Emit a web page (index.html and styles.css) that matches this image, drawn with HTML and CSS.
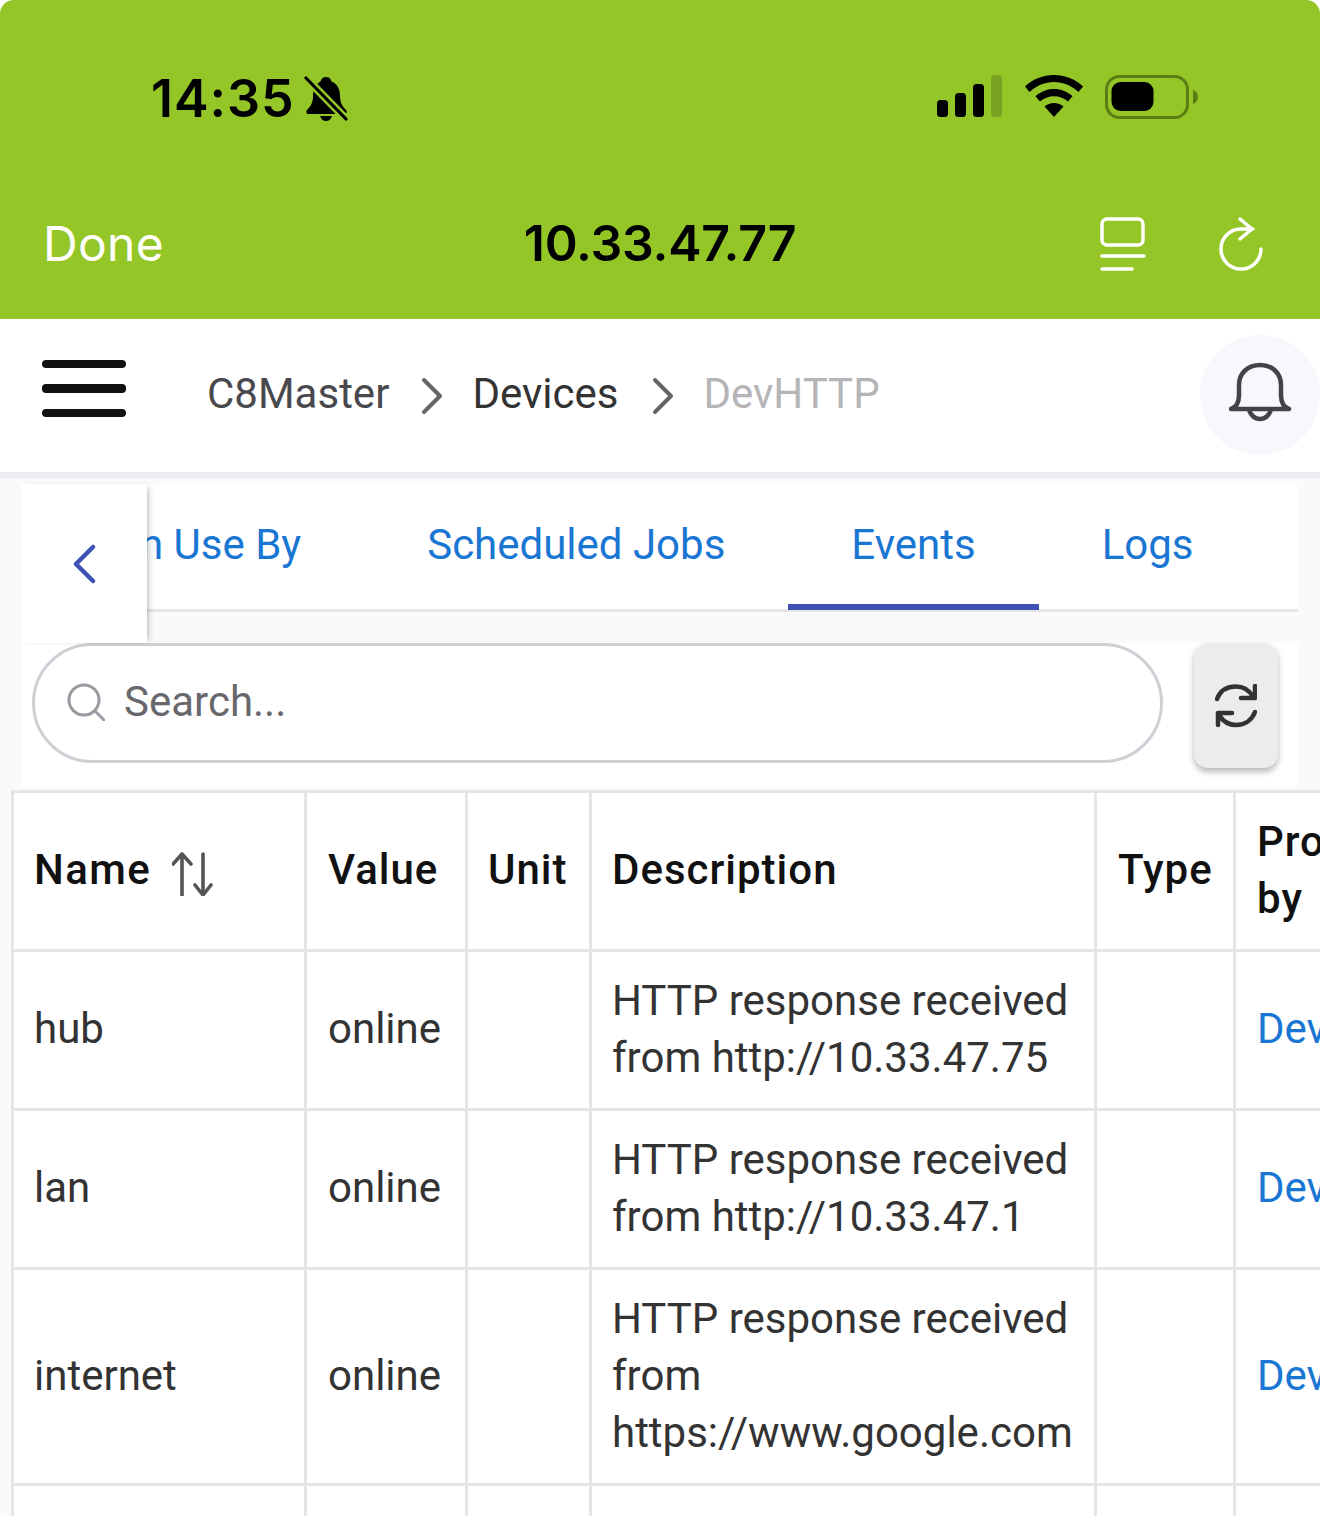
FILE: index.html
```html
<!DOCTYPE html>
<html lang="en">
<head>
<meta charset="utf-8">
<title>DevHTTP</title>
<link rel="stylesheet" href="styles.css">
</head>
<body>
<div class="page">
  <header class="browser">
    <div class="status">
      <div class="status-left">
        <span class="time">14:35</span>
        <svg class="mute" viewBox="0 0 44 46"><path d="M22 1c3 0 5 2 5.500 4.500C34 8 36 14 36 20c0 6 2 10 6 14 1.500 2 .5 4-2 4H5c-2.500 0-3.500-2-2-4 4-4 6-8 6-14 0-6 3-12 7.500-14.500C17 3 19 1 22 1z" fill="#000"/><path d="M16 40h12c-1 3-3 5-6 5s-5-2-6-5z" fill="#000"/><path d="M2 2l40 41" stroke="#94c627" stroke-width="8"/><path d="M2 2l40 41" stroke="#000" stroke-width="3.200" stroke-linecap="round"/></svg>
      </div>
      <div class="status-right">
        <svg class="signal" viewBox="0 0 66 42"><rect x="0" y="25" width="11" height="17" rx="3.500" fill="#000"/><rect x="18" y="18" width="11" height="24" rx="3.500" fill="#000"/><rect x="36" y="9" width="11" height="33" rx="3.500" fill="#000"/><rect x="54" y="0" width="11" height="42" rx="3.500" fill="#79a01e"/></svg>
        <svg class="wifi" viewBox="0 0 58 42"><path d="M29 0c11 0 21 4 29 11.500L53.500 17C46.500 10.500 38 7 29 7S11.500 10.500 4.500 17L0 11.500C8 4 18 0 29 0z" fill="#000"/><path d="M29 14c7 0 13.500 2.700 18.500 7.200L43 26.500c-3.800-3.300-8.700-5.300-14-5.300s-10.200 2-14 5.300l-4.500-5.300C15.500 16.700 22 14 29 14z" fill="#000"/><path d="M29 28c3.600 0 7 1.300 9.500 3.500L29 42l-9.500-10.500C22 29.300 25.400 28 29 28z" fill="#000"/></svg>
        <svg class="battery" viewBox="0 0 94 44"><rect x="1.500" y="1.500" width="81" height="41" rx="13" fill="none" stroke="#5b7d14" stroke-width="3"/><rect x="6.500" y="7" width="42" height="29" rx="9" fill="#000"/><path d="M88 15c3 1 5 4 5 7s-2 6-5 7z" fill="#5b7d14"/></svg>
      </div>
    </div>
    <div class="nav">
      <span class="done">Done</span>
      <span class="address">10.33.47.77</span>
      <div class="nav-icons">
        <svg class="nav-icon" viewBox="0 0 46 54"><rect x="2" y="2" width="41" height="26" rx="5" fill="none" stroke="#fff" stroke-width="3.500"/><path d="M2 39h42M2 52h30" stroke="#fff" stroke-width="3.500" stroke-linecap="round"/></svg>
        <svg class="nav-icon" viewBox="0 0 46 54"><path d="M43 32a20 20 0 1 1-20-20h12M22 2l12 10-12 10" fill="none" stroke="#fff" stroke-width="3.500" stroke-linecap="round" stroke-linejoin="round"/></svg>
      </div>
    </div>
  </header>

  <div class="appbar">
    <div class="burger"><i></i><i></i><i></i></div>
    <nav class="crumbs">
      <span>C8Master</span>
      <svg class="crumb-sep" viewBox="0 0 22 38"><path d="M3 3l16 16L3 35" fill="none" stroke="#666" stroke-width="4" stroke-linecap="round" stroke-linejoin="round"/></svg>
      <span class="crumb-dark">Devices</span>
      <svg class="crumb-sep" viewBox="0 0 22 38"><path d="M3 3l16 16L3 35" fill="none" stroke="#666" stroke-width="4" stroke-linecap="round" stroke-linejoin="round"/></svg>
      <span class="crumb-current">DevHTTP</span>
    </nav>
    <div class="bell"><svg viewBox="0 0 64 62"><path d="M3 48c6-2 8-8 8-14V24C11 12 20 4 32 4s21 8 21 20v10c0 6 2 12 8 14z" fill="none" stroke="#444448" stroke-width="4.500" stroke-linejoin="round" stroke-linecap="round"/><path d="M21 48c1 6 6 10 11 10s10-4 11-10" fill="none" stroke="#444448" stroke-width="4.500"/></svg></div>
  </div>

  <main class="content">
    <div class="card">
      <div class="tabs">
        <span class="tab">In Use By</span>
        <span class="tab">Scheduled Jobs</span>
        <span class="tab tab-active">Events</span>
        <span class="tab">Logs</span>
        <span class="tab-rest"></span>
      </div>
      <div class="tab-back"><svg viewBox="0 0 24 40"><path d="M21 3L4 20l17 17" fill="none" stroke="#3f51b5" stroke-width="4.500" stroke-linecap="round" stroke-linejoin="round"/></svg></div>
      <div class="tools">
        <label class="search">
          <svg viewBox="0 0 38 38"><circle cx="17" cy="17" r="15" fill="none" stroke="#9a9aa3" stroke-width="3"/><path d="M28 28l9 9" stroke="#9a9aa3" stroke-width="3" stroke-linecap="round"/></svg>
          <span class="search-text">Search...</span>
        </label>
        <button class="reload"><svg viewBox="0 0 42 44"><path d="M2 15C5 7 12 2.500 21 2.500c7 0 13 3.500 17 10M40 2v12H26M40 28c-3 8-10 13-19 13-7 0-13-3.500-17-10M3 41V29h14" fill="none" stroke="#333" stroke-width="4.500" stroke-linecap="round" stroke-linejoin="round"/></svg></button>
      </div>
    </div>
    <div class="table-wrap">
      <table>
        <colgroup><col class="c1"><col class="c2"><col class="c3"><col class="c4"><col class="c5"><col class="c6"></colgroup>
        <thead>
          <tr>
            <th><span class="name-head">Name<svg viewBox="0 0 42 44"><path d="M10 43V2M1 12l9-10 9 10" fill="none" stroke="#555" stroke-width="3.600" stroke-linecap="round" stroke-linejoin="round"/><path d="M31 2v41M23 33l8 10 8-10" fill="none" stroke="#555" stroke-width="3.600" stroke-linecap="round" stroke-linejoin="round"/></svg></span></th>
            <th>Value</th><th>Unit</th><th>Description</th><th>Type</th><th>Produced by</th>
          </tr>
        </thead>
        <tbody>
          <tr class="r2"><td>hub</td><td>online</td><td></td><td>HTTP response received from http://10.33.47.75</td><td></td><td class="link">DevHTTP</td></tr>
          <tr class="r2"><td>lan</td><td>online</td><td></td><td>HTTP response received from http://10.33.47.1</td><td></td><td class="link">DevHTTP</td></tr>
          <tr class="r3"><td>internet</td><td>online</td><td></td><td>HTTP response received from https://www.google.com</td><td></td><td class="link">DevHTTP</td></tr>
          <tr class="r2"><td></td><td></td><td></td><td></td><td></td><td></td></tr>
        </tbody>
      </table>
    </div>
  </main>
</div>
</body>
</html>
```
FILE: styles.css
```css
* { box-sizing: border-box; }
html, body { margin: 0; padding: 0; }
body { background: #fff; font-family: Roboto, "Liberation Sans", sans-serif; overflow: hidden; }
.page { width: 1320px; height: 1516px; overflow: hidden; display: flex; flex-direction: column; }

.browser { height: 319px; background: #94c627; border-radius: 14px 14px 0 0; display: flex; flex-direction: column; flex: none; font-family: Inter, sans-serif; }
.status { height: 196px; display: flex; justify-content: space-between; padding: 74px 121px 0 151px; }
.status-left { display: flex; align-items: flex-start; gap: 9px; }
.time { font-size: 52px; line-height: 50px; font-weight: 600; color: #000; letter-spacing: 0.9px; }
.mute { width: 44px; height: 46px; margin-top: 2px; }
.status-right { display: flex; align-items: flex-start; }
.signal { width: 66px; height: 42px; margin: 1px 0 0 2px; }
.wifi { width: 58px; height: 42px; margin: 1px 22px 0 22px; }
.battery { width: 94px; height: 44px; margin-top: 1px; }
.nav { height: 123px; position: relative; display: flex; justify-content: space-between; padding: 0 56px 0 43px; }
.done { font-size: 48px; line-height: 96px; color: #fff; letter-spacing: 0.3px; }
.address { position: absolute; left: 0; right: 0; top: 0; text-align: center; font-size: 50px; line-height: 94px; font-weight: 600; color: #000; letter-spacing: -0.25px; }
.nav-icons { display: flex; gap: 72px; padding-top: 21px; }
.nav-icon { width: 46px; height: 54px; }

.appbar { height: 159px; flex: none; background: #fff; border-bottom: 6px solid #ecedf3; display: flex; align-items: center; position: relative; padding-left: 42px; }
.burger { width: 84px; display: flex; flex-direction: column; gap: 16px; margin-top: -14px; }
.burger i { display: block; height: 8.500px; border-radius: 4px; background: #111; }
.crumbs { display: flex; align-items: center; margin: -5px 0 0 81px; font-size: 42px; color: #49494d; height: 60px; }
.crumb-sep { width: 22px; height: 38px; margin: 6px 29px 0 32px; }
.crumb-dark { color: #333; margin-right: 2px; }
.crumb-current { color: #b5b5b8; }
.bell { position: absolute; right: 0; top: 16px; width: 120px; height: 120px; border-radius: 50%; background: #f7f7fc; display: flex; align-items: center; justify-content: center; }
.bell svg { width: 64px; height: 62px; margin-top: -7px; }

.content { flex: 1; background: #fafafa; padding-top: 6px; min-height: 0; }
.card { margin: 0 22px 0 21px; position: relative; }
.tabs { height: 128px; background: #fff; display: flex; justify-content: flex-end; overflow: hidden; box-shadow: inset 0 -3px 0 #e6e6e6; }
.tab { flex: none; padding: 0 63px; height: 126px; line-height: 122px; font-size: 42px; color: #1976d2; white-space: nowrap; }
.tab-active { border-bottom: 6px solid #3f51b5; }
.tab-rest { flex: none; width: 41.500px; }
.tab-back { position: absolute; left: 0; top: 0; width: 126px; height: 159px; background: #fff; box-shadow: 4px 0 6px -3px rgba(0,0,0,.3); display: flex; align-items: center; justify-content: center; }
.tab-back svg { width: 24px; height: 40px; }
.tools { margin-top: 31px; height: 144px; background: #fff; display: flex; padding-left: 11px; }
.search { width: 1131px; height: 120px; border: 3px solid #cfcfd6; border-radius: 60px; display: flex; align-items: center; padding-left: 32px; gap: 19px; font-size: 42px; color: #68686c; }
.search svg { width: 38px; height: 38px; margin-top: -2px; }
.search-text { margin-top: -3px; }
.reload { margin-left: 31px; width: 84px; height: 125px; border: 0; padding: 0; border-radius: 14px; background: #ececec; box-shadow: 0 4px 6px rgba(0,0,0,.28); display: flex; align-items: center; justify-content: center; }
.reload svg { width: 42px; height: 44px; }

.table-wrap { margin: 3px 0 0 11px; background: #fff; }
table { border-collapse: collapse; table-layout: fixed; width: 1400px; font-size: 42px; color: #333; background: #fff; }
.c1 { width: 293px; } .c2 { width: 161px; } .c3 { width: 124px; } .c4 { width: 505px; } .c5 { width: 139px; } .c6 { width: 178px; }
th, td { border: 3px solid #e5e5e5; padding: 0 21px 3px; line-height: 57px; text-align: left; vertical-align: middle; }
th:nth-child(1), td:nth-child(1), th:nth-child(3), td:nth-child(3), th:nth-child(4), td:nth-child(4) { padding-left: 20px; }
th { height: 159px; font-weight: 500; color: #111; letter-spacing: 1px; }
.r2 td { height: 159px; }
.r3 td { height: 216px; }
.link { color: #1976d2; }
.name-head { display: inline-flex; align-items: center; gap: 21px; letter-spacing: 1.4px; }
.name-head svg { width: 42px; height: 44px; margin-top: 8px; }
```
